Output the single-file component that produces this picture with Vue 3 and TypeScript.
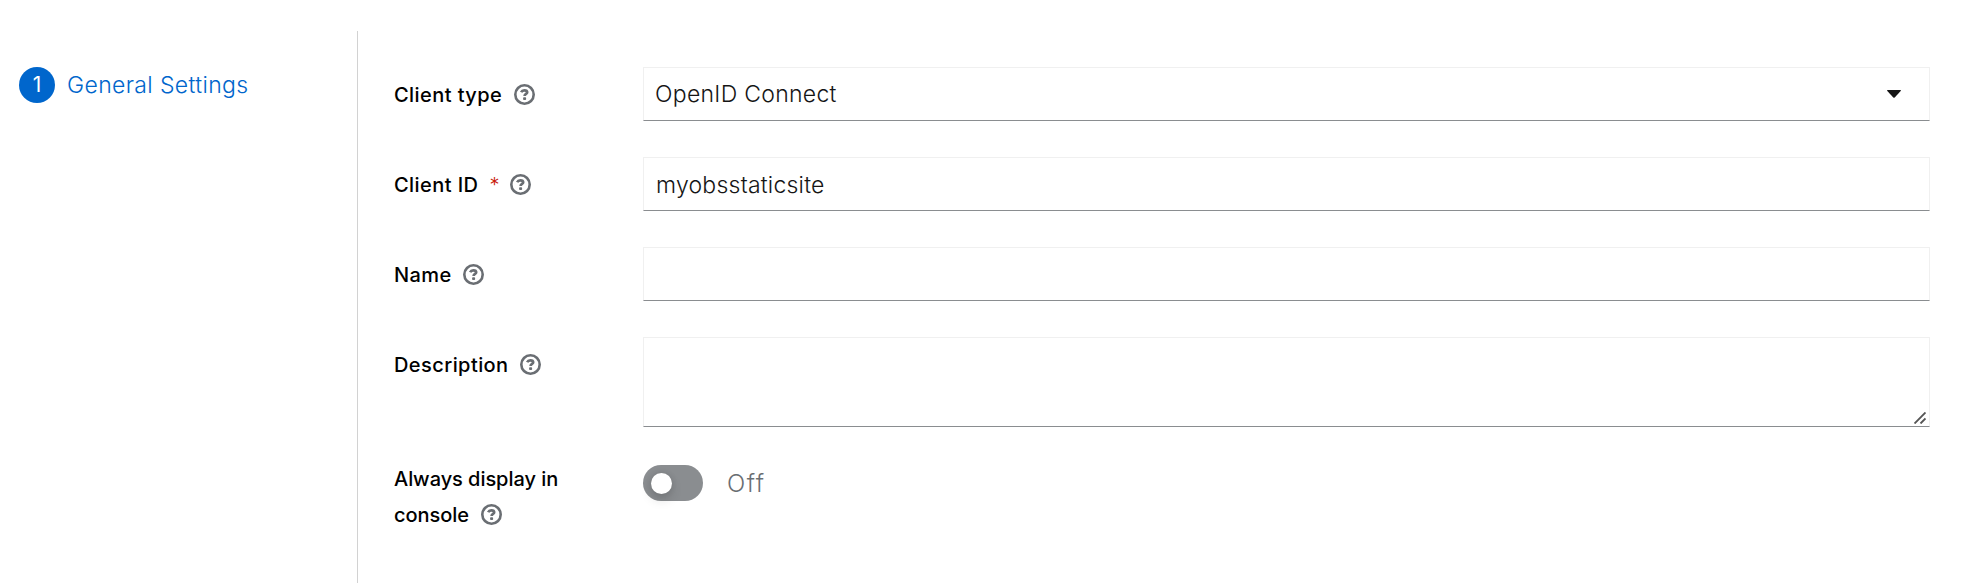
<script setup lang="ts">
import { ref } from 'vue'

type Kind = 'select' | 'text' | 'area' | 'switch'

interface Field {
  id: string
  label: string
  kind: Kind
  value: string
  required?: boolean
}

const fields = ref<Field[]>([
  { id: 'type', label: 'Client type', kind: 'select', value: 'OpenID Connect' },
  { id: 'client-id', label: 'Client ID', kind: 'text', value: 'myobsstaticsite', required: true },
  { id: 'name', label: 'Name', kind: 'text', value: '' },
  { id: 'description', label: 'Description', kind: 'area', value: '' },
  { id: 'always-display', label: 'Always display in console', kind: 'switch', value: 'Off' },
])

function toggle(field: Field) {
  field.value = field.value === 'Off' ? 'On' : 'Off'
}
</script>

<template>
  <div class="wizard">
    <nav class="steps">
      <a class="step">
        <span class="step-number">1</span>
        <span class="step-name">General Settings</span>
      </a>
    </nav>
    <main class="form">
      <div v-for="field in fields" :key="field.id" class="row" :class="'row-' + field.kind">
        <div class="label">
          <span class="label-text">{{ field.label }}</span>
          <span v-if="field.required" class="required">*</span>
          <svg class="help" viewBox="0 0 21 21" aria-hidden="true">
            <circle cx="10.5" cy="10.5" r="9.2" fill="none" stroke="currentColor" stroke-width="2.6" />
            <path d="M7.2 8.2C7.8 6.8 8.9 6.3 10.3 6.3C12.1 6.3 13.2 7.1 13.2 8.3C13.2 10 10.6 9.9 10.6 12.1" fill="none" stroke="currentColor" stroke-width="2.7" />
            <rect x="9.1" y="13.2" width="3" height="2.8" rx="0.8" fill="currentColor" />
          </svg>
        </div>

        <div v-if="field.kind === 'select'" class="control select">
          <span>{{ field.value }}</span>
          <svg class="caret" viewBox="0 0 14 8" aria-hidden="true">
            <path d="M0.6 0H13.4Q14.3 0.4 13.7 1.1L7.7 7.5Q7 8.1 6.3 7.5L0.3 1.1Q-0.3 0.4 0.6 0Z" fill="#151515" />
          </svg>
        </div>
        <input v-else-if="field.kind === 'text'" v-model="field.value" class="control" type="text" />
        <div v-else-if="field.kind === 'area'" class="area-wrap">
          <textarea v-model="field.value" class="control area"></textarea>
          <svg class="grip" viewBox="0 0 12 12" aria-hidden="true">
            <path d="M0.5 11.5L11.5 0.5M6.5 11.5L11.5 6.5" stroke="#555" stroke-width="1.9" />
          </svg>
        </div>
        <div v-else class="switch" @click="toggle(field)">
          <span class="track" :class="{ on: field.value === 'On' }"><span class="knob"></span></span>
          <span class="state">{{ field.value }}</span>
        </div>
      </div>
    </main>
  </div>
</template>

<style>
body {
  background: #fff;
  overflow: hidden;
}
</style>

<style scoped>
.wizard {
  display: flex;
  box-sizing: border-box;
  height: 583px;
  padding-top: 31px;
  font-family: Inter, "Liberation Sans", sans-serif;
  font-size: 23px;
  font-weight: 300;
  color: #151515;
}
.steps {
  box-sizing: border-box;
  width: 358px;
  padding: 36px 0 0 19px;
  border-right: 1px solid #d2d2d2;
}
.step {
  display: flex;
  align-items: center;
  color: #06c;
}
.step-number {
  width: 36px;
  height: 36px;
  margin-right: 12px;
  border-radius: 50%;
  background: #06c;
  color: #fff;
  font-size: 21px;
  font-weight: 400;
  line-height: 36px;
  text-align: center;
}
.step-name {
  line-height: 36px;
  letter-spacing: 0.36px;
}
.form {
  display: flex;
  flex: 1;
  flex-direction: column;
  gap: 36px;
  padding: 36px 54px 0 36px;
}
.row {
  display: grid;
  grid-template-columns: 249px 1fr;
}
.label {
  padding: 10px 36px 0 0;
  color: #000;
  font-size: 20px;
  font-weight: 500;
  line-height: 36px;
  letter-spacing: 0.43px;
}
.row-text,
.row-select {
  height: 54px;
}
.row-area {
  height: 90px;
}
.row-switch .label {
  margin-top: -2px;
  padding-top: 0;
  padding-right: 60px;
  letter-spacing: -0.05px;
}
.required {
  margin: 0 5px 0 6px;
  color: #c9190b;
  font-size: 20px;
  font-weight: 300;
}
.label-text + .required {
  margin-left: 11px;
}
.help {
  width: 21px;
  height: 21px;
  margin-left: 5px;
  color: #6a6e73;
  vertical-align: -3px;
}
.label-text + .help {
  margin-left: 11px;
}
.row-select .help,
.row-switch .help {
  margin-left: 12px;
}
.control {
  box-sizing: border-box;
  width: 100%;
  height: 54px;
  margin: 0;
  padding: 2px 12px 0;
  border: 1px solid #f0f0f0;
  border-bottom-color: #8a8d90;
  border-radius: 0;
  outline: none;
  background: #fff;
  color: #151515;
  font: inherit;
  letter-spacing: 0.23px;
}
.select {
  display: flex;
  align-items: center;
  justify-content: space-between;
  padding: 0 28px 0 11px;
  letter-spacing: 0.29px;
}
.caret {
  width: 14px;
  height: 8px;
}
.area-wrap {
  position: relative;
  height: 90px;
}
.area {
  display: block;
  height: 90px;
  resize: none;
}
.grip {
  position: absolute;
  right: 4px;
  bottom: 3px;
  width: 12px;
  height: 12px;
}
.switch {
  display: flex;
  align-items: center;
  height: 36px;
  margin-top: 2px;
}
.track {
  box-sizing: border-box;
  width: 60px;
  height: 36px;
  padding: 8px;
  border-radius: 18px;
  background: #8a8d90;
}
.track.on {
  background: #06c;
}
.knob {
  display: block;
  width: 21px;
  height: 21px;
  border-radius: 50%;
  background: #fff;
  box-shadow: 0 6px 12px rgba(3, 3, 3, 0.14), 0 0 6px rgba(3, 3, 3, 0.1);
}
.track.on .knob {
  margin-left: 23px;
}
.state {
  margin-left: 24px;
  color: #6a6e73;
  font-size: 24px;
  letter-spacing: 1.5px;
}
</style>
